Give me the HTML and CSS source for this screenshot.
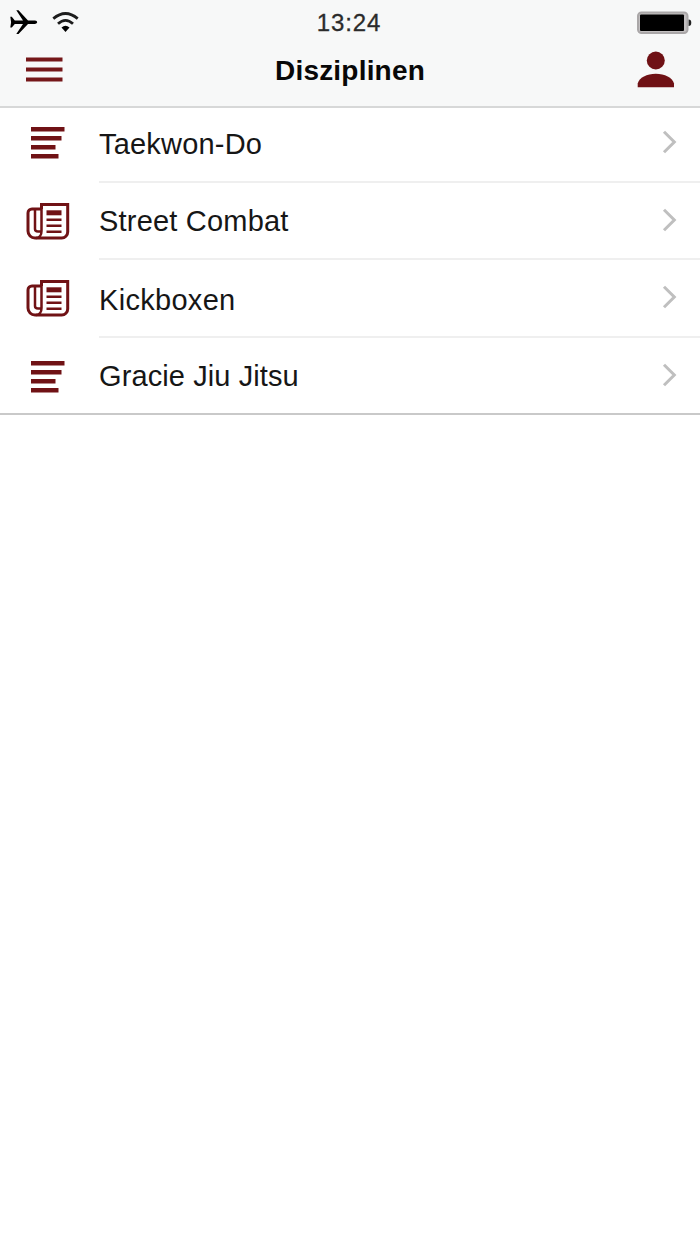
FILE: index.html
```html
<!DOCTYPE html>
<html lang="de">
<head>
<meta charset="utf-8">
<title>Disziplinen</title>
<link rel="stylesheet" href="styles.css">
</head>
<body>
<svg class="defs" width="0" height="0" aria-hidden="true">
  <symbol id="lines" viewBox="0 0 44 40">
    <path d="M5 5.300h33.500M5 14.200h30.500M5 23.200h24.500M5 32.200h27.500" fill="none" stroke="currentColor" stroke-width="4.600"/>
  </symbol>
  <symbol id="news" viewBox="0 0 44 40">
    <g fill="none" stroke="currentColor">
      <path d="M15.500 7V2.400H41.700V30a6 6 0 0 1-6 6H9a7 7 0 0 1-7-7V11a4 4 0 0 1 4-4h9.500" stroke-width="3"/>
      <path d="M15.500 2v27c0 4-2 7-5.500 7M9 7.500v19.500q0 2.500 3 2.500h3" stroke-width="2.500"/>
      <path d="M20.500 10.800h15" stroke-width="5"/>
      <path d="M20.500 17.800h15M20.500 23.800h15M20.500 29.800h15" stroke-width="2.500"/>
    </g>
  </symbol>
  <symbol id="chevron" viewBox="0 0 16 26">
    <path d="M2 2.800 12.300 13 2 23.200" fill="none" stroke="currentColor" stroke-width="3"/>
  </symbol>
</svg>
<header class="header">
  <div class="status">
    <div class="signals">
      <svg width="28" height="28" viewBox="0 0 28 28"><path d="M.3 8.800h1.500l3 3.700h8.200L6.300 2.300h2.200l9.500 10.200h7q2.200.3 2.200 1.700t-2.200 1.700h-7L8.500 26H6.300L13 15.900H4.800l-3 3.700H.3l.8-5.400z"/></svg>
      <svg width="28" height="28" viewBox="0 0 28 28"><g fill="none" stroke="#1c1c1c" stroke-width="2.800"><path d="M1.300 10.600Q13.500 .3 25.700 10.600"/><path d="M6 15.800Q13.500 8.900 21 15.800"/></g><path d="M9.500 19.600q4-3.600 8 0L13.500 24z"/></svg>
    </div>
    <time class="time">13:24</time>
    <svg class="battery" width="56" height="24" viewBox="0 0 56 24"><rect x="2" y="1.500" width="49.500" height="20.500" rx="3.500" fill="#c3c0c1" stroke="#aaa7a8" stroke-width="2"/><rect x="4" y="3.500" width="44" height="16.500" rx="1"/><path d="M52.600 8.500q2.700 0 2.700 3.300t-2.700 3.300z" fill="#222"/></svg>
  </div>
  <nav class="nav">
    <svg width="40" height="30" viewBox="0 0 40 30"><path d="M2 4.500h36.500M2 14.500h36.500M2 24.500h36.500" stroke="#751719" stroke-width="4"/></svg>
    <h1 class="title">Disziplinen</h1>
    <svg width="40" height="40" viewBox="0 0 40 40"><g fill="#6f1115"><circle cx="19.800" cy="10.500" r="9"/><path d="M1.700 37.300v-3.800C3 27.500 11 23.700 19.800 23.700S36.600 27.500 38 33.500v3.800z"/></g></svg>
  </nav>
</header>
<ul class="list">
  <li class="row first"><svg class="icon"><use href="#lines"/></svg><span class="label">Taekwon-Do</span><svg class="chevron"><use href="#chevron"/></svg></li>
  <li class="row"><svg class="icon"><use href="#news"/></svg><span class="label">Street Combat</span><svg class="chevron"><use href="#chevron"/></svg></li>
  <li class="row tall"><svg class="icon"><use href="#news"/></svg><span class="label">Kickboxen</span><svg class="chevron"><use href="#chevron"/></svg></li>
  <li class="row last"><svg class="icon"><use href="#lines"/></svg><span class="label">Gracie Jiu Jitsu</span><svg class="chevron"><use href="#chevron"/></svg></li>
</ul>
</body>
</html>
```
FILE: styles.css
```css
* { box-sizing: border-box; }
body {
  margin: 0;
  min-height: 1244px;
  background: #fff;
  color: #161616;
  font-family: "Liberation Sans", Arial, sans-serif;
}
svg { display: block; flex: none; }
.defs { position: absolute; }
.header {
  height: 108px;
  background: #f7f8f8;
  border-bottom: 2px solid #d7d8d8;
}
.status {
  display: grid;
  grid-template-columns: 1fr auto 1fr;
  align-items: start;
  height: 46px;
  padding: 8px 8px 0 10px;
}
.signals { display: flex; gap: 14px; }
.time {
  margin-right: 4px;
  padding-top: 1px;
  font-size: 24px;
  line-height: 28px;
  letter-spacing: 0.9px;
  color: #2b2b2b;
  -webkit-text-stroke: 0.3px #2b2b2b;
}
.battery { justify-self: end; margin-top: 3px; }
.nav {
  display: grid;
  grid-template-columns: 1fr auto 1fr;
  align-items: start;
  padding: 4px 24px 0;
}
.nav svg { margin-top: 5px; }
.nav svg:last-child { justify-self: end; margin-top: 0; }
.title {
  margin: 4px 0 0;
  font-size: 28px;
  line-height: 34px;
  font-weight: bold;
  letter-spacing: 0.2px;
  color: #080808;
}
.list { margin: 0; padding: 0; list-style: none; }
.row {
  display: flex;
  align-items: flex-start;
  height: 77px;
  padding: 18px 22px 0 26px;
  background: linear-gradient(#efefef, #efefef) 99px 100% / 100% 2px no-repeat;
}
.first { height: 75px; padding-top: 16px; }
.tall { height: 78px; }
.last { border-bottom: 2px solid #c9c9c9; background: none; }
.icon { width: 44px; height: 40px; margin-top: 1px; color: #701215; }
.first .icon { margin-top: 0; }
.last .icon { margin-top: 2px; }
.label {
  flex: 1;
  margin: 3px 0 0 29px;
  font-size: 29px;
  line-height: 34px;
  letter-spacing: 0.2px;
  white-space: nowrap;
}
.tall .label { margin-top: 5px; letter-spacing: 0.3px; }
.last .label { letter-spacing: 0.1px; }
.chevron { width: 16px; height: 26px; margin-top: 6px; color: #bfbfbf; }
.first .chevron { margin-top: 5px; }
```
